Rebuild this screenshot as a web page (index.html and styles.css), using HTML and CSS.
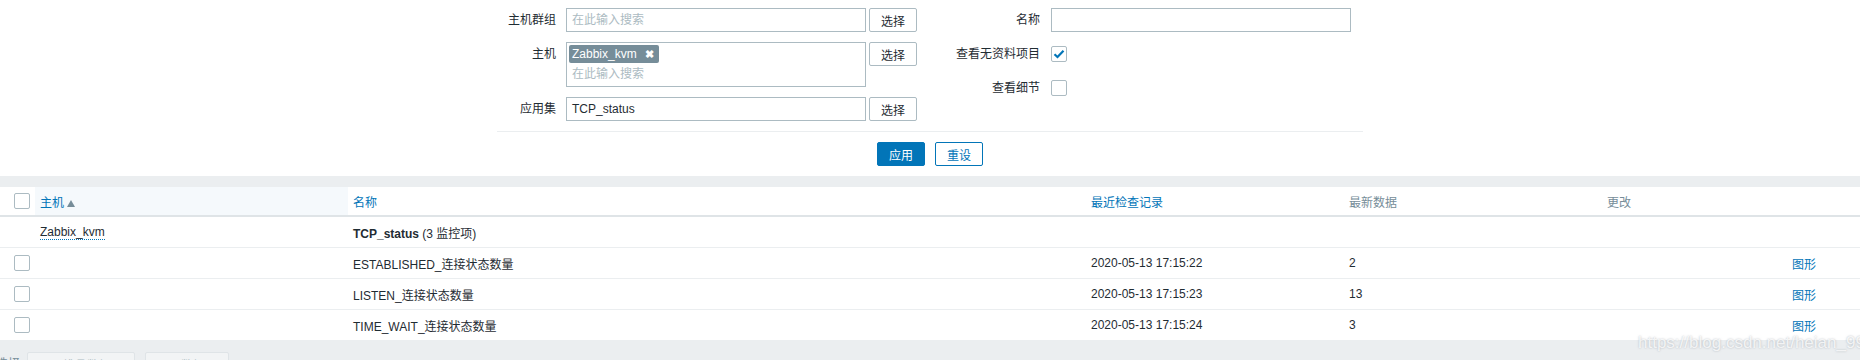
FILE: index.html
```html
<!doctype html>
<html>
<head>
<meta charset="UTF-8">
<link rel="stylesheet" href="styles.css">
</head>
<body>
<div class="filter-wrap">
  <div class="filter">
    <div class="filter-cols">
      <div class="fcol">
        <div class="frow">
          <label>主机群组</label>
          <div class="ms"><span class="ph">在此输入搜索</span></div>
          <button class="btn-grey">选择</button>
        </div>
        <div class="frow">
          <label>主机</label>
          <div class="ms tall">
            <span class="tag">Zabbix_kvm<span class="x">&#10006;</span></span>
            <span class="ph">在此输入搜索</span>
          </div>
          <button class="btn-grey">选择</button>
        </div>
        <div class="frow">
          <label>应用集</label>
          <div class="ms"><span class="val">TCP_status</span></div>
          <button class="btn-grey">选择</button>
        </div>
      </div>
      <div class="fcol right">
        <div class="frow">
          <label>名称</label>
          <div class="ms"></div>
        </div>
        <div class="frow">
          <label>查看无资料项目</label>
          <span class="cb checked"><svg width="12" height="10" viewBox="0 0 12 10"><path d="M1.5 5.2 4.5 8 10.5 1.8" fill="none" stroke="#0275b8" stroke-width="2.2"/></svg></span>
        </div>
        <div class="frow">
          <label>查看细节</label>
          <span class="cb"></span>
        </div>
      </div>
    </div>
    <div class="filter-btns">
      <button class="btn-main">应用</button>
      <button class="btn-alt">重设</button>
    </div>
  </div>
</div>

<div class="gap"></div>

<table class="list">
  <colgroup>
    <col style="width:35px">
    <col style="width:313px">
    <col style="width:738px">
    <col style="width:258px">
    <col style="width:258px">
    <col style="width:185px">
    <col style="width:73px">
  </colgroup>
  <thead>
    <tr>
      <th class="cbcell"><span class="cb"></span></th>
      <th class="sorted"><a>主机</a><span class="arrow"></span></th>
      <th><a>名称</a></th>
      <th><a>最近检查记录</a></th>
      <th class="plain">最新数据</th>
      <th class="plain">更改</th>
      <th></th>
    </tr>
  </thead>
  <tbody>
    <tr>
      <td></td>
      <td><a class="host">Zabbix_kvm</a></td>
      <td><b>TCP_status</b> (3 监控项)</td>
      <td></td>
      <td></td>
      <td></td>
      <td></td>
    </tr>
    <tr>
      <td class="cbcell"><span class="cb"></span></td>
      <td></td>
      <td>ESTABLISHED_连接状态数量</td>
      <td>2020-05-13 17:15:22</td>
      <td>2</td>
      <td></td>
      <td><a class="link">图形</a></td>
    </tr>
    <tr>
      <td class="cbcell"><span class="cb"></span></td>
      <td></td>
      <td>LISTEN_连接状态数量</td>
      <td>2020-05-13 17:15:23</td>
      <td>13</td>
      <td></td>
      <td><a class="link">图形</a></td>
    </tr>
    <tr>
      <td class="cbcell"><span class="cb"></span></td>
      <td></td>
      <td>TIME_WAIT_连接状态数量</td>
      <td>2020-05-13 17:15:24</td>
      <td>3</td>
      <td></td>
      <td><a class="link">图形</a></td>
    </tr>
  </tbody>
</table>

<div class="actions">
  <span class="count">0 选择</span>
  <button class="btn-dis wide">显示堆叠数据图</button>
  <button class="btn-dis">显示数据图</button>
</div>

<div class="watermark">https://blog.csdn.net/heian_99</div>
</body>
</html>
```

FILE: styles.css
```css
body{
  margin: 0;
  padding: 0;
  background: #fff;
  color: #1f2c33;
  font-family: "Liberation Sans", Arial, "Noto Sans CJK SC", sans-serif;
  font-size: 12px;
  overflow: hidden;
}

button{
  font-family: inherit;
  font-size: 12px;
  box-sizing: border-box;
  height: 24px;
  padding: 0 8px;
  border-radius: 2px;
  cursor: pointer;
}

/* filter */
.filter-wrap{
  padding: 8px 0 10px;
}

.filter{
  width: 866px;
  margin: 0 auto;
}

.filter-cols{
  display: flex;
  border-bottom: 1px solid #ebeef0;
  padding-bottom: 10px;
}

.fcol{
  display: flex;
  flex-direction: column;
  gap: 10px;
}

.frow{
  display: grid;
  grid-template-columns: 69px 300px 51px;
  align-items: start;
}

.fcol.right .frow{
  grid-template-columns: 134px 300px;
  min-height: 24px;
  align-items: center;
}

.frow label{
  line-height: 24px;
  text-align: right;
  padding-right: 10px;
}

.fcol.right .frow label{
  padding-right: 11px;
}

.ms{
  box-sizing: border-box;
  height: 24px;
  border: 1px solid #acbbc2;
  padding: 0 5px;
  line-height: 22px;
  background: #fff;
}

.ms.tall{
  height: 45px;
  padding: 2px 2px 0;
  line-height: 18px;
}

.ms.tall .ph{
  display: block;
  padding: 0 3px;
  margin-top: 2px;
}

.ph{
  color: #acbbc2;
}

.tag{
  display: inline-block;
  background: #768d99;
  color: #fff;
  height: 18px;
  line-height: 18px;
  padding: 0 5px 0 3px;
  border-radius: 2px;
}

.tag .x{
  font-size: 11px;
  font-weight: bold;
  margin-left: 8px;
}

.btn-grey{
  margin-left: 3px;
  width: 48px;
  background: #fff;
  border: 1px solid #acbbc2;
  color: #1f2c33;
}

.cb{
  display: inline-block;
  box-sizing: border-box;
  width: 16px;
  height: 16px;
  border: 1px solid #acbbc2;
  border-radius: 2px;
  background: #fff;
  vertical-align: middle;
  position: relative;
}

.cb svg{
  position: absolute;
  left: 1px;
  top: 2px;
}

.filter-btns{
  display: flex;
  justify-content: center;
  gap: 10px;
  padding-top: 10px;
}

.btn-main{
  width: 48px;
  background: #0275b8;
  border: 1px solid #0275b8;
  color: #fff;
}

.btn-alt{
  width: 48px;
  background: #fff;
  border: 1px solid #0275b8;
  color: #0275b8;
}

.gap{
  height: 11px;
  background: #ebeef0;
}

/* list */
.list{
  width: 1860px;
  table-layout: fixed;
  border-collapse: separate;
  border-spacing: 0;
}

.list th,
.list td{
  box-sizing: border-box;
  padding: 0 5px;
  text-align: left;
  white-space: nowrap;
}

.list th{
  height: 30px;
  font-weight: normal;
  border-bottom: 2px solid #dfe4e7;
  color: #0275b8;
}

.list th.plain{
  color: #768d99;
}

.list th.sorted{
  background: #f5f9fc;
}

.arrow{
  display: inline-block;
  width: 0;
  height: 0;
  border-left: 4px solid transparent;
  border-right: 4px solid transparent;
  border-bottom: 7px solid #768d99;
  margin-left: 3px;
  vertical-align: 0;
}

.list td{
  height: 31px;
  border-bottom: 1px solid #ebeef0;
}

.list .cbcell{
  padding-left: 14px;
}

.host{
  color: #1f2c33;
  border-bottom: 1px dotted #0275b8;
}

.link{
  color: #0275b8;
}

.actions{
  background: #ebeef0;
  height: 40px;
  display: flex;
  align-items: flex-start;
  padding-top: 11px;
  box-sizing: border-box;
  margin-left: -14px;
}

.count{
  line-height: 24px;
  color: #768d99;
  width: 41px;
}

.btn-dis{
  width: 84px;
  margin-right: 10px;
  background: #f2f4f5;
  border: 1px solid #dfe4e7;
  color: #acbbc2;
}

.btn-dis.wide{
  width: 108px;
}

.watermark{
  position: absolute;
  left: 1638px;
  top: 333px;
  font-size: 17px;
  color: rgba(255,255,255,0.8);
  text-shadow: 0 0 2px rgba(120,130,140,0.55);
}
```
